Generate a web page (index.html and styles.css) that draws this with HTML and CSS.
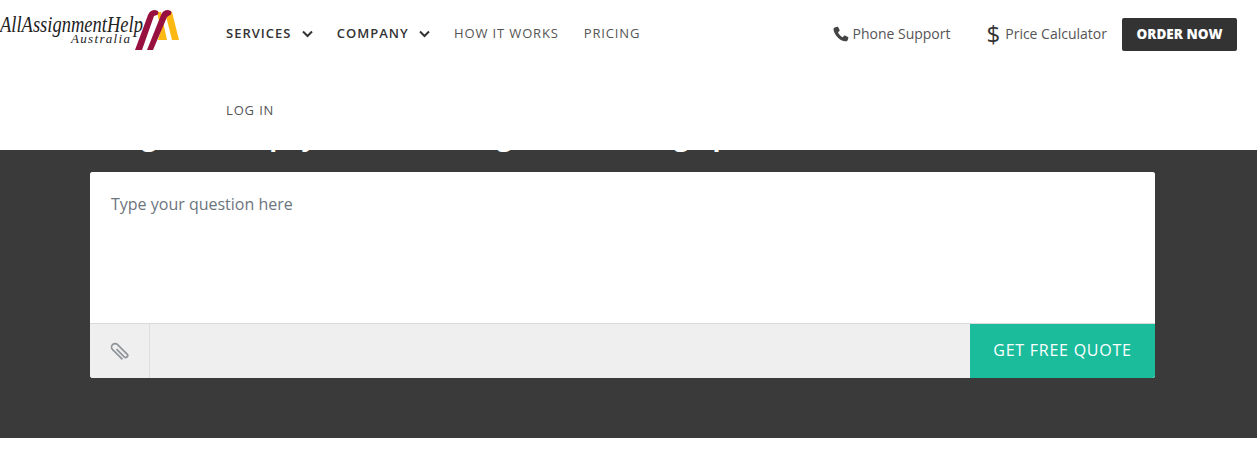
FILE: index.html
```html
<!DOCTYPE html>
<html lang="en">
<head>
    <meta charset="UTF-8">
    <title>All Assignment Help Australia</title>
    <link rel="stylesheet" href="styles.css">
</head>
<body>
    <header class="site-header">
        <a class="logo" href="#">
            <svg width="182" height="56" viewBox="0 0 182 56">
                <text class="logo-main" x="0" y="32" textLength="143" lengthAdjust="spacingAndGlyphs">AllAssignmentHelp</text>
                <text class="logo-sub" x="71" y="43" textLength="59" lengthAdjust="spacing">Australia</text>
                <path d="M157 12 L161 12 L167 40 L158 40 L161 30 Z" fill="#fdb913"/>
                <path d="M169 11 L172 12 L179 40 L172 40 L166 16 Z" fill="#fdb913"/>
                <path d="M135 50 L148 15 Q150 10 155 10 L158 11 Q159 14 157 15 L154 16 L142 50 Z" fill="#97103f"/>
                <path d="M147 50 L161 15 Q163 10 168 10 L171 11 Q172 14 170 15 L167 17 L153 50 Z" fill="#97103f"/>
            </svg>
        </a>
        <nav class="main-nav">
            <a class="nav-link strong" href="#">SERVICES
                <svg class="chevron" width="11" height="8" viewBox="0 0 11 8"><path d="M1 1.5 L5.5 6 L10 1.5" fill="none" stroke="#333" stroke-width="2"/></svg>
            </a>
            <a class="nav-link strong" href="#">COMPANY
                <svg class="chevron" width="11" height="8" viewBox="0 0 11 8"><path d="M1 1.5 L5.5 6 L10 1.5" fill="none" stroke="#333" stroke-width="2"/></svg>
            </a>
            <a class="nav-link" href="#">HOW IT WORKS</a>
            <a class="nav-link" href="#">PRICING</a>
            <a class="nav-link" href="#">LOG IN</a>
        </nav>
        <div class="header-right">
            <a class="contact phone" href="#">
                <svg width="16" height="16" viewBox="0 0 16 16"><path d="M4.2 .8 L1.6 1.6 C.6 2 .4 3 .7 4.4 C1.7 9 6.5 14.4 11.6 15.3 C13 15.5 14 15.2 14.5 14.4 L15.4 12 C15.5 11.6 15.4 11.3 15 11.1 L11.9 9.6 C11.5 9.4 11.2 9.5 11 9.8 L9.8 11.2 C7.8 10.4 5.8 8.2 5 6.2 L6.4 5 C6.7 4.7 6.8 4.4 6.6 4 L5.1 1.1 C4.9 .8 4.6 .7 4.2 .8 Z" fill="#444"/></svg>
                Phone Support
            </a>
            <a class="contact price" href="#"><span class="dollar">$</span> Price Calculator</a>
            <a class="order-btn" href="#">ORDER NOW</a>
        </div>
    </header>

    <section class="hero">
        <h2 class="hero-title">Assign task &amp; pay less now and get the writing up</h2>
        <form class="quote-card">
            <textarea class="question" placeholder="Type your question here"></textarea>
            <div class="card-footer">
                <div class="attach">
                    <svg class="clip" width="24" height="24" viewBox="0 0 24 24"><path d="M11.5 7.5 V18.5 A2 2 0 0 0 15.5 18.5 V5 A3.5 3.5 0 0 0 8.5 5 V19" transform="rotate(-45 12 12)" fill="none" stroke="#8f9599" stroke-width="1.7"/></svg>
                </div>
                <div class="spacer"></div>
                <button class="quote-btn" type="button">GET FREE QUOTE</button>
            </div>
        </form>
    </section>
</body>
</html>
```

FILE: styles.css
```css
* {
    box-sizing: border-box;
}
body {
    margin: 0;
    font-family: "Open Sans", Arial, sans-serif;
    background: #fff;
    color: #333;
}
a {
    text-decoration: none;
    color: inherit;
}
.site-header {
    position: absolute;
    top: 0;
    left: 0;
    width: 100%;
    height: 150px;
    background: #fff;
    display: flex;
    align-items: flex-start;
    padding-right: 20px;
}
.logo {
    width: 226px;
    height: 56px;
    flex: none;
}
.logo-main {
    font-family: "Liberation Serif", serif;
    font-style: italic;
    font-size: 24px;
    fill: #222;
}
.logo-sub {
    font-family: "Liberation Serif", serif;
    font-style: italic;
    font-size: 13px;
    fill: #222;
}
.main-nav {
    width: 440px;
    display: flex;
    flex-wrap: wrap;
    align-content: flex-start;
    column-gap: 25px;
}
.nav-link {
    height: 77px;
    padding-top: 24px;
    line-height: 18px;
    font-size: 13px;
    letter-spacing: .85px;
    color: #555;
}
.nav-link.strong {
    font-weight: 600;
    letter-spacing: 1px;
    margin-right: -1px;
    color: #333;
}
.nav-link:nth-child(5) {
    margin-right: 200px;
}
.chevron {
    margin-left: 6px;
}
.header-right {
    margin-left: auto;
    display: flex;
    align-items: center;
    height: 33px;
    margin-top: 18px;
    font-size: 14px;
    color: #555;
}
.contact {
    display: flex;
    align-items: center;
    gap: 4px;
    padding-bottom: 2px;
}
.phone {
    margin-right: 36px;
    gap: 3px;
}
.price {
    margin-right: 15px;
    gap: 5px;
}
.dollar {
    font-size: 24px;
    font-weight: 500;
    line-height: 22px;
    color: #333;
}
.order-btn {
    width: 115px;
    height: 33px;
    line-height: 33px;
    text-align: center;
    background: #333;
    color: #fff;
    font-size: 13.5px;
    font-weight: 800;
    border-radius: 2px;
}
.hero {
    background: #3a3a3a;
    height: 438px;
    padding: 0 102px 0 90px;
}
.hero-title {
    margin: 0;
    height: 172px;
    padding-top: 118px;
    font-size: 26px;
    line-height: 36px;
    font-weight: 700;
    color: #fff;
    white-space: nowrap;
}
.quote-card {
    background: #fff;
    border-radius: 3px;
    overflow: hidden;
    display: flex;
    flex-direction: column;
    height: 206px;
}
.question {
    flex: 1;
    border: 0;
    resize: none;
    outline: none;
    padding: 21px;
    font-family: inherit;
    font-size: 16px;
    line-height: 22px;
    color: #333;
}
.question::placeholder {
    color: #6c757d;
    opacity: 1;
}
.card-footer {
    height: 55px;
    display: flex;
    background: #efefef;
    border-top: 1px solid #d9d9d9;
}
.attach {
    width: 60px;
    border-right: 1px solid #dedede;
    display: flex;
    align-items: center;
    justify-content: center;
}
.clip {
    margin-top: 2px;
}
.spacer {
    flex: 1;
}
.quote-btn {
    width: 185px;
    border: 0;
    background: #1abc9c;
    color: #fff;
    font-family: inherit;
    font-size: 16px;
    font-weight: 500;
    letter-spacing: .75px;
    padding: 0 0 2px;
}
```
